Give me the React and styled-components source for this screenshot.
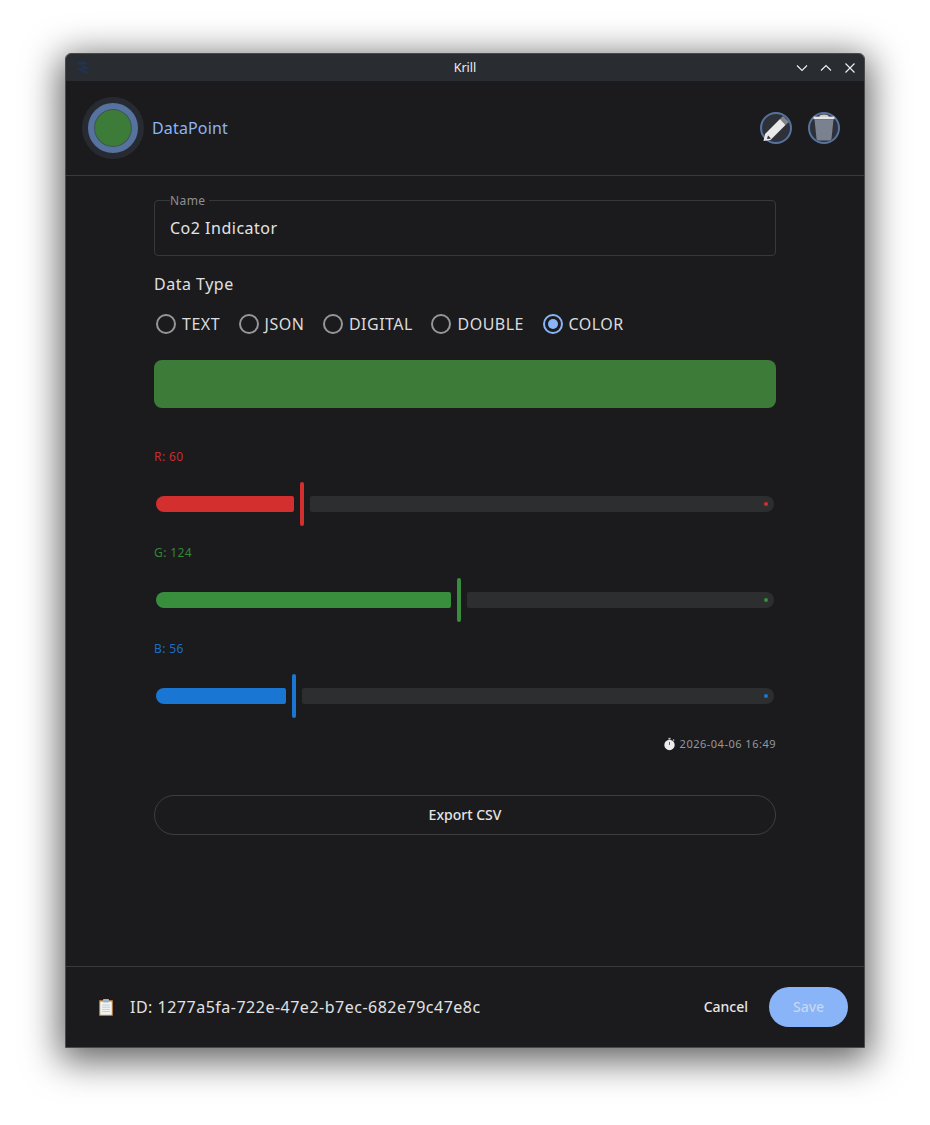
import React from "react";
import styled, { createGlobalStyle } from "styled-components";

const Global = createGlobalStyle`
  html, body { margin: 0; padding: 0; background: #fff; }
  body { font-family: "Noto Sans", sans-serif; width: 930px; height: 1125px; overflow: hidden; }
`;

const Win = styled.div`
  width: 798px; height: 993px; margin: 54px 0 0 66px;
  display: flex; flex-direction: column; box-sizing: content-box;
  background: #1b1b1d; border-radius: 5px 5px 0 0;
  outline: 1px solid #4a4a4c;
  box-shadow: 0 8px 36px 6px rgba(0,0,0,.62);
`;
const TitleBar = styled.div`
  height: 27px; background: #292c31; border-radius: 5px 5px 0 0; display: grid;
  grid-template-columns: 1fr auto 1fr; align-items: center; padding: 0 6px 0 8px;
  color: #eceff2; font-size: 12.5px;
`;
const TitleText = styled.span`line-height: 27px; margin-right: 2px;`;
const WinButtons = styled.div`display: flex; justify-content: flex-end; gap: 8px;`;
const Header = styled.header`
  height: 95px; box-sizing: border-box; border-bottom: 1px solid #3a3a3d;
  display: flex; align-items: center; padding: 0 24px 1px 16px;
`;
const Halo = styled.div`
  width: 62px; height: 62px; border-radius: 50%; background: #272a30;
  display: flex; align-items: center; justify-content: center; margin-right: 8px;
`;
const Ring = styled.div`
  width: 38px; height: 38px; border-radius: 50%; background: #3c7c38;
  border: 6px solid #56739f; box-shadow: inset 0 0 0 1px #424c63;
`;
const Title = styled.span`color: #8ab4f8; font-size: 16px; letter-spacing: .15px; flex: 1;`;
const Actions = styled.div`display: flex; gap: 16px;`;
const ActionIcon = styled.svg`width: 32px; height: 32px; display: block;`;
const Body = styled.main`
  flex: 1; padding: 24px 88px 0; display: flex; flex-direction: column;
`;
const NameField = styled.fieldset`
  margin: -7px 0 0; padding: 0 15px; height: 63px; box-sizing: border-box;
  border: 1px solid #38383b; border-radius: 4px; min-width: 0;
`;
const NameLegend = styled.legend`
  color: #8f8f92; font-size: 12px; line-height: 14px; padding: 0 4px 0 0; height: 14px; letter-spacing: .4px;
  position: relative; top: 1px;
`;
const NameValue = styled.div`color: #e4e4e6; font-size: 16px; line-height: 24px; margin-top: 9px; letter-spacing: .5px;`;
const SectionLabel = styled.div`
  color: #e0e0e2; font-size: 16px; line-height: 24px; letter-spacing: .5px; margin-top: 16px;
`;
const Radios = styled.div`display: flex; gap: 16.5px; margin-top: 16px; height: 24px; align-items: center;`;
const RadioItem = styled.label`
  display: flex; align-items: center; gap: 6px; color: #dcdcde; font-size: 16px; line-height: 24px;
  padding-left: 2px; letter-spacing: .5px;
`;
const RadioCircle = styled.span`
  width: 20px; height: 20px; box-sizing: border-box; border-radius: 50%;
  border: 2px solid ${p => (p.$on ? "#8ab4f8" : "#96969a")};
  display: flex; align-items: center; justify-content: center;
  &::after { content: ""; width: 10px; height: 10px; border-radius: 50%; background: ${p => (p.$on ? "#8ab4f8" : "transparent")}; }
`;
const Preview = styled.div`height: 48px; margin-top: 24px; border-radius: 8px; background: #3c7c38;`;
const Sliders = styled.div`margin-top: 41px; display: flex; flex-direction: column;`;
const SliderBlock = styled.div`height: 96px;`;
const SliderLabel = styled.div`color: ${p => p.$c}; font-size: 12px; line-height: 16px; letter-spacing: .4px; opacity: .93;`;
const SliderRow = styled.div`
  height: 44px; margin: 17px 2px 0; display: flex; align-items: center;
`;
const Active = styled.div`
  height: 16px; background: ${p => p.$c}; border-radius: 8px 2px 2px 8px; flex: none;
`;
const Thumb = styled.div`
  width: 4px; height: 44px; border-radius: 2px; background: ${p => p.$c}; margin: 0 6px; flex: none;
`;
const Inactive = styled.div`
  flex: 1; height: 16px; background: #2d2e30; border-radius: 2px 8px 8px 2px; position: relative;
  &::after {
    content: ""; position: absolute; right: 6px; top: 6px; width: 4px; height: 4px; border-radius: 50%;
    background: ${p => p.$c};
  }
`;
const Stamp = styled.div`
  display: flex; justify-content: flex-end; align-items: center; gap: 4px; color: #97979a;
  font-size: 11px; line-height: 16px; margin-top: -1px; letter-spacing: .5px;
`;
const ExportBtn = styled.button`
  margin-top: 43px; height: 40px; border-radius: 20px; background: transparent; border: 1px solid #3e3e41;
  color: #e4e4e6; font: 500 14px "Noto Sans", sans-serif; width: 100%; padding: 0 0 2px;
`;
const Footer = styled.footer`
  height: 81px; box-sizing: border-box; border-top: 1px solid #3a3a3d; display: flex; align-items: center;
  padding: 0 16px 0 31px;
`;
const IdText = styled.span`color: #e2e2e4; font-size: 16px; letter-spacing: .5px; margin-left: 15px; flex: 1;`;
const CancelBtn = styled.button`
  background: none; border: 0; color: #e6e6e8; font: 500 14px "Noto Sans", sans-serif; padding: 0 0 1px; margin-right: 21px;
`;
const SaveBtn = styled.button`
  width: 79px; height: 40px; border-radius: 20px; background: #8ab4f8; border: 0;
  color: #c6d6ee; font: 500 14px "Noto Sans", sans-serif; padding: 0 0 1px;
`;
const AppGlyph = styled.svg`width: 16px; height: 16px; display: block;`;

const Chev = ({ d }) => (
  <svg width="16" height="16" viewBox="0 0 16 16" fill="none" stroke="#f0f2f4" strokeWidth="1.1"><path d={d} /></svg>
);

const Pencil = () => (
  <ActionIcon viewBox="0 0 32 32">
    <circle cx="16" cy="16" r="15" fill="#2e3138" stroke="#56739f" strokeWidth="2" />
    <path d="M20 7 23 4 29 10 25.5 13Z" fill="#81848b" />
    <path d="M20 7 25.5 13 10.5 28 3.5 29 5 22Z" fill="#e9e9ea" />
    <path d="M8 23.5 11 26.5 7 27Z" fill="#2e3138" />
  </ActionIcon>
);
const Trash = () => (
  <ActionIcon viewBox="0 0 32 32">
    <circle cx="16" cy="16" r="15" fill="#2e3138" stroke="#56739f" strokeWidth="2" />
    <path d="M11.5 3.6Q16 1.6 20.5 3.6V5h-9z" fill="#c9cbce" />
    <path d="M5.5 4.6h21v2.6h-21z" fill="#e3e4e6" />
    <path d="M6.5 7.2h19l-2 19.5a2 2 0 0 1-2 1.8h-11a2 2 0 0 1-2-1.8z" fill="#7a8290" />
  </ActionIcon>
);
const Stopwatch = () => (
  <svg width="13" height="14" viewBox="0 0 14 14">
    <rect x="5.8" y="0.4" width="2.4" height="1.8" fill="#bdbdbd" />
    <rect x="10.6" y="2" width="1.6" height="1.6" fill="#a8a8a8" transform="rotate(45 11.4 2.8)" />
    <circle cx="7" cy="8" r="5.6" fill="#ededed" />
    <path d="M7 8V4.8" stroke="#555" strokeWidth="1" />
  </svg>
);
const Clipboard = () => (
  <svg width="18" height="18" viewBox="0 0 18 18">
    <rect x="2" y="2" width="14" height="16" rx="1" fill="#a9743f" />
    <rect x="3.2" y="3.5" width="11.6" height="13.3" fill="#f4f4f0" />
    <rect x="6" y="1" width="6" height="3.4" rx=".6" fill="#9fb4c0" />
    <path d="M5 7h8M5 9.2h8M5 11.4h8M5 13.6h8" stroke="#a8c6d8" strokeWidth=".8" />
  </svg>
);

const TYPES = ["TEXT", "JSON", "DIGITAL", "DOUBLE", "COLOR"];
const CH = [
  { l: "R", v: 60, w: 138, c: "#d32f2f" },
  { l: "G", v: 124, w: 295, c: "#388e3c" },
  { l: "B", v: 56, w: 130, c: "#1976d2" },
];

export default function App() {
  return (
    <>
      <Global />
      <Win>
        <TitleBar>
          <AppGlyph viewBox="0 0 16 16" fill="none" stroke="#22324f" strokeWidth="2">
            <path d="M13 3H5l8 5-8 1 8 4" />
          </AppGlyph>
          <TitleText>Krill</TitleText>
          <WinButtons>
            <Chev d="M3 5.5 8 10.5 13 5.5" />
            <Chev d="M3 10.5 8 5.5 13 10.5" />
            <Chev d="M3.5 3.5 12.5 12.5M12.5 3.5 3.5 12.5" />
          </WinButtons>
        </TitleBar>
        <Header>
          <Halo><Ring /></Halo>
          <Title>DataPoint</Title>
          <Actions><Pencil /><Trash /></Actions>
        </Header>
        <Body>
          <NameField>
            <NameLegend>Name</NameLegend>
            <NameValue>Co2 Indicator</NameValue>
          </NameField>
          <SectionLabel>Data Type</SectionLabel>
          <Radios>
            {TYPES.map(t => (
              <RadioItem key={t}><RadioCircle $on={t === "COLOR"} />{t}</RadioItem>
            ))}
          </Radios>
          <Preview />
          <Sliders>
            {CH.map(s => (
              <SliderBlock key={s.l}>
                <SliderLabel $c={s.c}>{s.l}: {s.v}</SliderLabel>
                <SliderRow>
                  <Active $c={s.c} style={{ width: `${s.w}px` }} />
                  <Thumb $c={s.c} />
                  <Inactive $c={s.c} />
                </SliderRow>
              </SliderBlock>
            ))}
          </Sliders>
          <Stamp><Stopwatch />2026-04-06 16:49</Stamp>
          <ExportBtn>Export CSV</ExportBtn>
        </Body>
        <Footer>
          <Clipboard />
          <IdText>ID: 1277a5fa-722e-47e2-b7ec-682e79c47e8c</IdText>
          <CancelBtn>Cancel</CancelBtn>
          <SaveBtn>Save</SaveBtn>
        </Footer>
      </Win>
    </>
  );
}
